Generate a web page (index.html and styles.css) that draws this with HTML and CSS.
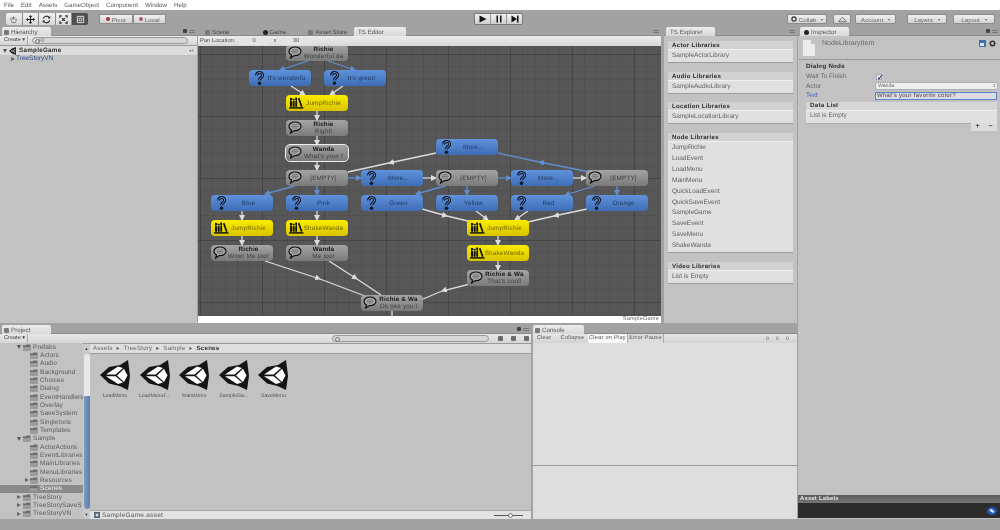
FILE: index.html
```html
<!DOCTYPE html>
<html lang="en">
<head>
<meta charset="utf-8">
<title>TreeStory - Unity</title>
<link rel="stylesheet" href="styles.css">
</head>
<body>
<svg class="defs" aria-hidden="true">
  <defs>
    <symbol id="i-q" viewBox="0 0 9 14">
      <path d="M1.6 4.6C1.6 .6 7.6 .6 7.6 4.2C7.6 6.6 4.5 6.4 4.5 9.2" fill="none" stroke="#0c1420" stroke-width="3"/>
      <path d="M1.6 4.6C1.6 .6 7.6 .6 7.6 4.2C7.6 6.6 4.5 6.4 4.5 9.2" fill="none" stroke="#6a9ae0" stroke-width="1"/>
      <circle cx="4.5" cy="12.2" r="1.7" fill="#0c1420"/>
    </symbol>
    <symbol id="i-bub" viewBox="0 0 14 13">
      <path d="M7 1C3.4 1 1 2.9 1 5.3C1 7 2 8.3 3.6 9L2.6 12L6.4 9.6C10.4 9.8 13 7.9 13 5.3C13 2.9 10.6 1 7 1Z" fill="#a8a8a8" stroke="#0b0b0b" stroke-width="1.1"/>
      <path d="M4 3.8H10M3.4 5.4H10.6M4 7H9.6" stroke="#6c6c6c" stroke-width=".8"/>
    </symbol>
    <symbol id="i-book" viewBox="0 0 16 13">
      <path d="M1 1H3.2V10.5H1ZM3.9 2H6V10.5H3.9ZM6.7 .5H8.6V10.5H6.7Z" fill="#111"/>
      <path d="M9.5 1.5L11.2 .8L14.5 10.2L12.8 10.8Z" fill="#111"/>
      <path d="M0 11H15.5V12.6H0Z" fill="#111"/>
      <path d="M1.6 4H7.8" stroke="#e8d800" stroke-width=".8"/>
    </symbol>
    <symbol id="i-unity" viewBox="0 0 30 30">
      <path d="M0 15L9 7L20 5L28 0L30 16L28 30L19.5 26L9 23.5Z" fill="#141414"/>
      <path d="M6 14.5L18 6.5L23 8L15.6 14.5ZM6 16.2H15.6L23 22.6L18 24ZM17 15.4L24 8.8L27.5 15.6L24 22Z" fill="#fff"/>
    </symbol>
    <symbol id="i-folder" viewBox="0 0 9 7">
      <path d="M0 1H3.4L4.2 0H8.4V7H0Z" fill="#6e6e6e"/>
      <path d="M0 3H8.4V7H0Z" fill="#9c9c9c"/>
    </symbol>
    <marker id="a-w" viewBox="0 0 6 6" refX="5" refY="3" markerWidth="6" markerHeight="6" orient="auto" markerUnits="userSpaceOnUse">
      <path d="M0 0L6 3L0 6Z" fill="#dcdcdc"/>
    </marker>
    <marker id="a-b" viewBox="0 0 6 6" refX="5" refY="3" markerWidth="6" markerHeight="6" orient="auto" markerUnits="userSpaceOnUse">
      <path d="M0 0L6 3L0 6Z" fill="#5f8ed2"/>
    </marker>
  </defs>
</svg>

<div class="app">
  <nav class="menubar">
    <span>File</span><span>Edit</span><span>Assets</span><span>GameObject</span><span>Component</span><span>Window</span><span>Help</span>
  </nav>

  <header class="toolbar">
    <div class="btn-group tools">
      <button class="tool"><svg viewBox="0 0 10 10"><path d="M2 5V3.5M3.5 5V2M5 5V1.5M6.5 5V2.5M8 6V4M2 5L3.5 8.5H7L8 6" fill="none" stroke="#777" stroke-width="1"/></svg></button>
      <button class="tool"><svg viewBox="0 0 10 10"><path d="M5 0L7 2.2H5.6V4.4H7.8V3L10 5L7.8 7V5.6H5.6V7.8H7L5 10L3 7.8H4.4V5.6H2.2V7L0 5L2.2 3V4.4H4.4V2.2H3Z" fill="#222"/></svg></button>
      <button class="tool"><svg viewBox="0 0 10 10"><path d="M1.5 4A3.6 3.6 0 0 1 8 3M8.5 6A3.6 3.6 0 0 1 2 7" fill="none" stroke="#222" stroke-width="1.3"/><path d="M6.6 3.8L9.4 3.8L9 1ZM3.4 6.2L.6 6.2L1 9Z" fill="#222"/></svg></button>
      <button class="tool"><svg viewBox="0 0 10 10"><path d="M1 3V1H3M7 1H9V3M9 7V9H7M3 9H1V7" fill="none" stroke="#222" stroke-width="1.2"/><path d="M3.5 3.5L6.5 6.5M6.5 3.5L3.5 6.5" stroke="#222" stroke-width="1.2"/></svg></button>
      <button class="tool tool-on"><svg viewBox="0 0 10 10"><path d="M1.5 1.5H8.5V8.5H1.5Z" fill="none" stroke="#eee" stroke-width="1"/><path d="M3.5 3.5H6.5V6.5H3.5Z" fill="none" stroke="#ddd" stroke-width="1"/></svg></button>
    </div>
    <div class="btn-group pivot">
      <button class="tbtn pivot-btn"><i class="dot dot-red"></i>Pivot</button>
      <button class="tbtn pivot-btn"><i class="dot dot-grey"></i>Local</button>
    </div>
    <div class="btn-group play">
      <button class="play-btn"><svg viewBox="0 0 8 8"><path d="M.5 .5L7.5 4L.5 7.5Z" fill="#111"/></svg></button>
      <button class="play-btn"><svg viewBox="0 0 8 8"><path d="M1.5 .5H3V7.5H1.5ZM5 .5H6.5V7.5H5Z" fill="#111"/></svg></button>
      <button class="play-btn"><svg viewBox="0 0 8 8"><path d="M.5 .5L6 4L.5 7.5ZM6 .5H7.5V7.5H6Z" fill="#111"/></svg></button>
    </div>
    <div class="right-tools">
      <button class="tbtn collab"><svg class="tbtn-ic" viewBox="0 0 8 8"><circle cx="4" cy="4" r="2.8" fill="none" stroke="#333" stroke-width="1.6"/></svg>Collab<b>▾</b></button>
      <button class="tbtn cloud"><svg class="cloud-ic" viewBox="0 0 12 8"><path d="M1 7H11L8.5 3.5L6 1L3.5 3.5Z" fill="none" stroke="#444" stroke-width=".9"/></svg></button>
      <button class="tbtn account">Account<b>▾</b></button>
      <button class="tbtn layers">Layers<b>▾</b></button>
      <button class="tbtn layout">Layout<b>▾</b></button>
    </div>
  </header>

  <div class="main">
    <div class="workspace">
      <div class="top-row">

        <section class="panel hierarchy">
          <div class="tabs">
            <span class="tab"><i class="tab-ic"></i>Hierarchy</span>
            <span class="tab-menu"><i class="lock"></i><i class="burger"></i></span>
          </div>
          <div class="panel-bar">
            <span class="mini-btn">Create ▾</span>
            <span class="search search-h">All</span>
          </div>
          <div class="scene-row">
            <span class="tri tri-down"></span>
            <svg class="scene-ic" viewBox="0 0 8 8"><path d="M0 4L3 1.5L7 0V8L3 6.5Z" fill="#222"/><path d="M2 4H4.5L6 2M4.5 4L6 6" stroke="#ddd" stroke-width=".8" fill="none"/></svg>
            <b>SampleGame</b>
            <span class="row-menu">▾≡</span>
          </div>
          <div class="go-row"><span class="tri tri-right"></span>TreeStoryVN</div>
        </section>

        <section class="panel editor">
          <div class="tabs editor-tabs">
            <span class="tab-off"><i class="tab-ic"></i>Scene</span>
            <span class="tab-off tab-game"><i class="tab-ic tab-ic-dark"></i>Game</span>
            <span class="tab-off tab-store"><i class="tab-ic"></i>Asset Store</span>
            <span class="tab tab-editor">TS Editor</span>
            <span class="tab-menu"><i class="burger"></i></span>
          </div>
          <div class="editor-bar">
            <span class="field-label">Pan Location:</span>
            <span class="num-field">0</span>
            <span class="x-label">x</span>
            <span class="num-field num-wide">30</span>
          </div>
          <div class="canvas">
            <svg class="edges" viewBox="198 46 463 270" aria-hidden="true">
              <g class="edge-blue">
                <path d="M308 61L280 70" marker-end="url(#a-b)"/>
                <path d="M328 61L355 70" marker-end="url(#a-b)"/>
                <path d="M348 178H361" marker-end="url(#a-b)"/>
                <path d="M295 186L265 194" marker-end="url(#a-b)"/>
                <path d="M317 186V195" marker-end="url(#a-b)"/>
                <path d="M498 178H511" marker-end="url(#a-b)"/>
                <path d="M445 186L416 194" marker-end="url(#a-b)"/>
                <path d="M467 186V195" marker-end="url(#a-b)"/>
                <path d="M595 186L565 195" marker-end="url(#a-b)"/>
                <path d="M617 186V195" marker-end="url(#a-b)"/>
                <path d="M590 172L539 162L498 153" marker-mid="url(#a-b)"/>
              </g>
              <g class="edge-white">
                <path d="M291 86L305 95" marker-end="url(#a-w)"/>
                <path d="M343 86L330 95" marker-end="url(#a-w)"/>
                <path d="M317 111V120" marker-end="url(#a-w)"/>
                <path d="M317 136V145" marker-end="url(#a-w)"/>
                <path d="M317 162V170" marker-end="url(#a-w)"/>
                <path d="M423 178H436" marker-end="url(#a-w)"/>
                <path d="M573 178H586" marker-end="url(#a-w)"/>
                <path d="M242 211V220" marker-end="url(#a-w)"/>
                <path d="M242 236V245" marker-end="url(#a-w)"/>
                <path d="M317 211V220" marker-end="url(#a-w)"/>
                <path d="M317 236V245" marker-end="url(#a-w)"/>
                <path d="M436 153L389 163L348 172" marker-mid="url(#a-w)"/>
                <path d="M265 261L320 279L365 296" marker-mid="url(#a-w)"/>
                <path d="M329 261L357 279L381 295" marker-mid="url(#a-w)"/>
                <path d="M422 209L447 216L472 222" marker-mid="url(#a-w)"/>
                <path d="M476 211L488 220" marker-end="url(#a-w)"/>
                <path d="M528 211L515 220" marker-end="url(#a-w)"/>
                <path d="M587 209L554 216L528 222" marker-mid="url(#a-w)"/>
                <path d="M498 236V245" marker-end="url(#a-w)"/>
                <path d="M498 261V270" marker-end="url(#a-w)"/>
                <path d="M470 284L442 291L423 299" marker-mid="url(#a-w)"/>
                <path d="M392 311V316"/>
              </g>
            </svg>

            <div class="node gray col-b row-45"><svg class="ic-bub"><use href="#i-bub"/></svg><p class="txt"><b>Richie</b><span>Wonderful da</span></p></div>
            <div class="node blue col-a row-70"><svg class="ic-q"><use href="#i-q"/></svg><p class="txt">It's wonderfu</p></div>
            <div class="node blue col-c row-70"><svg class="ic-q"><use href="#i-q"/></svg><p class="txt">It's great!</p></div>
            <div class="node yellow col-b row-95"><svg class="ic-book"><use href="#i-book"/></svg><p class="txt">JumpRichie</p></div>
            <div class="node gray col-b row-120"><svg class="ic-bub"><use href="#i-bub"/></svg><p class="txt"><b>Richie</b><span>Right!</span></p></div>
            <div class="node gray selected col-b row-145"><svg class="ic-bub"><use href="#i-bub"/></svg><p class="txt"><b>Wanda</b><span>What's your f</span></p></div>
            <div class="node blue col-e row-139"><svg class="ic-q"><use href="#i-q"/></svg><p class="txt">More...</p></div>

            <div class="node gray col-b row-170"><svg class="ic-bub"><use href="#i-bub"/></svg><p class="txt"><span>[EMPTY]</span></p></div>
            <div class="node blue col-d row-170"><svg class="ic-q"><use href="#i-q"/></svg><p class="txt">More...</p></div>
            <div class="node gray col-e row-170"><svg class="ic-bub"><use href="#i-bub"/></svg><p class="txt"><span>[EMPTY]</span></p></div>
            <div class="node blue col-f row-170"><svg class="ic-q"><use href="#i-q"/></svg><p class="txt">More...</p></div>
            <div class="node gray col-g row-170"><svg class="ic-bub"><use href="#i-bub"/></svg><p class="txt"><span>[EMPTY]</span></p></div>

            <div class="node blue col-h row-195"><svg class="ic-q"><use href="#i-q"/></svg><p class="txt">Blue</p></div>
            <div class="node blue col-b row-195"><svg class="ic-q"><use href="#i-q"/></svg><p class="txt">Pink</p></div>
            <div class="node blue col-d row-195"><svg class="ic-q"><use href="#i-q"/></svg><p class="txt">Green</p></div>
            <div class="node blue col-e row-195"><svg class="ic-q"><use href="#i-q"/></svg><p class="txt">Yellow</p></div>
            <div class="node blue col-f row-195"><svg class="ic-q"><use href="#i-q"/></svg><p class="txt">Red</p></div>
            <div class="node blue col-g row-195"><svg class="ic-q"><use href="#i-q"/></svg><p class="txt">Orange</p></div>

            <div class="node yellow col-h row-220"><svg class="ic-book"><use href="#i-book"/></svg><p class="txt">JumpRichie</p></div>
            <div class="node yellow col-b row-220"><svg class="ic-book"><use href="#i-book"/></svg><p class="txt">ShakeWanda</p></div>
            <div class="node yellow col-j row-220"><svg class="ic-book"><use href="#i-book"/></svg><p class="txt">JumpRichie</p></div>
            <div class="node yellow col-j row-245"><svg class="ic-book"><use href="#i-book"/></svg><p class="txt">ShakeWanda</p></div>

            <div class="node gray col-h row-245"><svg class="ic-bub"><use href="#i-bub"/></svg><p class="txt"><b>Richie</b><span>Wow! Me too!</span></p></div>
            <div class="node gray col-b row-245"><svg class="ic-bub"><use href="#i-bub"/></svg><p class="txt"><b>Wanda</b><span>Me too!</span></p></div>
            <div class="node gray col-j row-270"><svg class="ic-bub"><use href="#i-bub"/></svg><p class="txt"><b>Richie &amp; Wa</b><span>That's cool!</span></p></div>
            <div class="node gray col-d row-295"><svg class="ic-bub"><use href="#i-bub"/></svg><p class="txt"><b>Richie &amp; Wa</b><span>Ok see you l</span></p></div>
          </div>
          <div class="canvas-foot">SampleGame</div>
        </section>

        <section class="panel explorer">
          <div class="tabs">
            <span class="tab tab-explorer">TS Explorer</span>
            <span class="tab-menu"><i class="burger"></i></span>
          </div>
          <div class="explorer-body">
            <div class="lib"><h3>Actor Libraries</h3><ul><li>SampleActorLibrary</li></ul></div>
            <div class="lib"><h3>Audio Libraries</h3><ul><li>SampleAudioLibrary</li></ul></div>
            <div class="lib"><h3>Location Libraries</h3><ul><li>SampleLocationLibrary</li></ul></div>
            <div class="lib"><h3>Node Libraries</h3><ul>
              <li>JumpRichie</li><li>LoadEvent</li><li>LoadMenu</li><li>MainMenu</li><li>QuickLoadEvent</li><li>QuickSaveEvent</li><li>SampleGame</li><li>SaveEvent</li><li>SaveMenu</li><li>ShakeWanda</li>
            </ul></div>
            <div class="lib"><h3>Video Libraries</h3><ul><li>List is Empty</li></ul></div>
          </div>
        </section>
      </div>

      <div class="bottom-row">
        <section class="panel project">
          <div class="tabs tabs-tall">
            <span class="tab"><i class="tab-ic"></i>Project</span>
            <span class="tab-menu"><i class="lock"></i><i class="burger"></i></span>
          </div>
          <div class="panel-bar project-bar">
            <span class="mini-btn">Create ▾</span>
            <span class="search search-p"></span>
            <span class="bar-icons"><i></i><i></i><i></i></span>
          </div>
          <div class="project-body">
            <div class="tree">
              <div class="row lvl1"><span class="tri tri-down"></span><svg class="folder"><use href="#i-folder"/></svg>Prefabs</div>
              <div class="row lvl2"><svg class="folder"><use href="#i-folder"/></svg>Actors</div>
              <div class="row lvl2"><svg class="folder"><use href="#i-folder"/></svg>Audio</div>
              <div class="row lvl2"><svg class="folder"><use href="#i-folder"/></svg>Background</div>
              <div class="row lvl2"><svg class="folder"><use href="#i-folder"/></svg>Choices</div>
              <div class="row lvl2"><svg class="folder"><use href="#i-folder"/></svg>Dialog</div>
              <div class="row lvl2"><svg class="folder"><use href="#i-folder"/></svg>EventHandlers</div>
              <div class="row lvl2"><svg class="folder"><use href="#i-folder"/></svg>Overlay</div>
              <div class="row lvl2"><svg class="folder"><use href="#i-folder"/></svg>SaveSystem</div>
              <div class="row lvl2"><svg class="folder"><use href="#i-folder"/></svg>Singletons</div>
              <div class="row lvl2"><svg class="folder"><use href="#i-folder"/></svg>Templates</div>
              <div class="row lvl1"><span class="tri tri-down"></span><svg class="folder"><use href="#i-folder"/></svg>Sample</div>
              <div class="row lvl2"><svg class="folder"><use href="#i-folder"/></svg>ActorActions</div>
              <div class="row lvl2"><svg class="folder"><use href="#i-folder"/></svg>EventLibraries</div>
              <div class="row lvl2"><svg class="folder"><use href="#i-folder"/></svg>MainLibraries</div>
              <div class="row lvl2"><svg class="folder"><use href="#i-folder"/></svg>MenuLibraries</div>
              <div class="row lvl2"><span class="tri tri-right"></span><svg class="folder"><use href="#i-folder"/></svg>Resources</div>
              <div class="row lvl2 row-sel"><svg class="folder"><use href="#i-folder"/></svg>Scenes</div>
              <div class="row lvl1"><span class="tri tri-right"></span><svg class="folder"><use href="#i-folder"/></svg>TreeStory</div>
              <div class="row lvl1"><span class="tri tri-right"></span><svg class="folder"><use href="#i-folder"/></svg>TreeStorySaveS</div>
              <div class="row lvl1"><span class="tri tri-right"></span><svg class="folder"><use href="#i-folder"/></svg>TreeStoryVN</div>
            </div>
            <div class="scrollbar">
              <span class="sb-arrow">▲</span>
              <span class="sb-track"></span>
              <span class="sb-thumb"></span>
              <span class="sb-arrow">▼</span>
            </div>
            <div class="assets">
              <div class="crumbs">Assets &nbsp;▸&nbsp; TreeStory &nbsp;▸&nbsp; Sample &nbsp;▸&nbsp; <b>Scenes</b></div>
              <div class="asset-grid">
                <figure class="asset"><svg class="unity"><use href="#i-unity"/></svg><figcaption>LoadMenu</figcaption></figure>
                <figure class="asset"><svg class="unity"><use href="#i-unity"/></svg><figcaption>LoadMenuF...</figcaption></figure>
                <figure class="asset"><svg class="unity"><use href="#i-unity"/></svg><figcaption>MainMenu</figcaption></figure>
                <figure class="asset"><svg class="unity"><use href="#i-unity"/></svg><figcaption>SampleGa...</figcaption></figure>
                <figure class="asset"><svg class="unity"><use href="#i-unity"/></svg><figcaption>SaveMenu</figcaption></figure>
              </div>
              <div class="asset-foot">
                <svg class="asset-ic" viewBox="0 0 7 7"><path d="M0 0H7V7H0Z" fill="#567"/><path d="M2 2H5V5H2Z" fill="#cde"/></svg>
                <span>SampleGame.asset</span>
                <span class="slider"><i></i></span>
              </div>
            </div>
          </div>
        </section>

        <section class="panel console">
          <div class="tabs tabs-tall">
            <span class="tab tab-console"><i class="tab-ic"></i>Console</span>
          </div>
          <div class="console-bar">
            <span class="cbtn cbtn-clear">Clear</span>
            <span class="cbtn cbtn-collapse">Collapse</span>
            <span class="cbtn cbtn-on">Clear on Play</span>
            <span class="cbtn cbtn-err">Error Pause</span>
            <span class="counts"><i>0</i><i>0</i><i>0</i></span>
          </div>
          <div class="console-log"></div>
          <div class="console-detail"></div>
        </section>
      </div>
    </div>

    <aside class="panel inspector">
      <div class="tabs">
        <span class="tab tab-inspector"><i class="tab-ic tab-ic-dark"></i>Inspector</span>
        <span class="tab-menu"><i class="lock"></i><i class="burger"></i></span>
      </div>
      <div class="insp-head">
        <svg class="doc" viewBox="0 0 12 16"><path d="M0 0H8L12 4V16H0Z" fill="#ececec"/><path d="M8 0V4H12Z" fill="#bbb"/></svg>
        <span class="insp-title">NodeLibraryItem</span>
        <span class="insp-actions">
          <svg viewBox="0 0 7 7"><path d="M0 0H7V7H0Z" fill="#3f6ea8"/><path d="M1 3H5V6H1Z" fill="#dbe6f2"/></svg>
          <svg viewBox="0 0 7 7"><circle cx="3.5" cy="3.5" r="2.2" fill="none" stroke="#333" stroke-width="1.6"/></svg>
        </span>
      </div>
      <div class="insp-body">
        <h4>Dialog Node</h4>
        <div class="prop"><label>Wait To Finish</label><span class="check">✓</span></div>
        <div class="prop"><label>Actor</label><span class="dropdown">Wanda<b>⇕</b></span></div>
        <div class="prop prop-focus"><label>Text</label><span class="text-input">What's your favorite color?</span></div>
        <div class="data-list">
          <h5>Data List</h5>
          <p>List is Empty</p>
        </div>
        <div class="list-foot"><span>+</span><span>−</span></div>
      </div>
      <div class="labels-head">Asset Labels</div>
      <div class="labels-body"><svg class="tag" viewBox="0 0 10 8"><ellipse cx="5" cy="4" rx="5" ry="4" fill="#2458b8"/><path d="M2.5 2.5L4.5 2L7.5 4.5L6 6L3 4Z" fill="#eef"/></svg></div>
    </aside>
  </div>

  <footer class="status"></footer>
</div>
</body>
</html>
```

FILE: styles.css
```css
* { box-sizing: border-box; }

html, body {
  margin: 0;
  padding: 0;
  background: #a2a2a2;
}

body {
  font-family: "Liberation Sans", Arial, sans-serif;
  font-size: 6.5px;
  color: #4c4c4c;
  text-rendering: geometricPrecision;
}

.defs { position: absolute; width: 0; height: 0; }

button { font: inherit; color: inherit; padding: 0; margin: 0; border: 0; }
h3, h4, h5, p, ul, figure { margin: 0; padding: 0; }
ul { list-style: none; }
i { font-style: normal; }

.app {
  width: 1000px;
  height: 530px;
  display: flex;
  flex-direction: column;
  overflow: hidden;
  background: #a2a2a2;
  filter: blur(.35px);
}

/* menu */
.menubar {
  flex: 0 0 10px;
  display: flex;
  align-items: center;
  gap: 7px;
  padding-left: 4px;
  background: #fff;
  font-size: 6.2px;
  color: #555;
}

/* toolbar */
.toolbar {
  flex: 0 0 17px;
  display: flex;
  align-items: center;
  padding: 1px 5px 0 6px;
  background: #a2a2a2;
}

.btn-group { display: flex; height: 12px; }

.tools { width: 82px; border-radius: 2px; overflow: hidden; }

.tool {
  flex: 1;
  display: flex;
  align-items: center;
  justify-content: center;
  background: linear-gradient(#f2f2f2, #d6d6d6);
  border-right: 1px solid #8a8a8a;
}
.tool svg { width: 9px; height: 9px; }
.tool-on { background: #4f4f4f; border-right: 0; }

.pivot { margin-left: 11px; width: 67px; height: 10px; }

.tbtn {
  display: flex;
  align-items: center;
  justify-content: center;
  gap: 2px;
  height: 10px;
  font-size: 6.2px;
  color: #666;
  background: linear-gradient(#efefef, #d2d2d2);
  border: 1px solid #8c8c8c;
  border-radius: 2px;
}
.pivot-btn { flex: 1; border-radius: 0; }
.dot { width: 4px; height: 4px; border-radius: 50%; }
.dot-red { background: #a03040; }
.dot-grey { background: #a06068; }

.play { margin-left: 308px; width: 49px; border: 1px solid #777; border-radius: 2px; overflow: hidden; }
.play-btn {
  flex: 1;
  display: flex;
  align-items: center;
  justify-content: center;
  background: linear-gradient(#f0f0f0, #d0d0d0);
  border-right: 1px solid #999;
}
.play-btn:last-child { border-right: 0; }
.play-btn svg { width: 8px; height: 8px; }

.right-tools { margin-left: auto; display: flex; }
.tbtn b { font-weight: 400; font-size: 4px; margin-left: 3px; }
.tbtn-ic { width: 6px; height: 6px; }
.cloud-ic { width: 9px; height: 7px; }
.collab { width: 40px; }
.cloud { width: 18px; margin-left: 6px; }
.account { width: 41px; margin-left: 4px; }
.layers { width: 40px; margin-left: 11px; }
.layout { width: 42px; margin-left: 6px; }

/* layout */
.main { flex: 0 0 492px; display: flex; }
.workspace { flex: 0 0 797px; display: flex; flex-direction: column; }
.top-row { flex: 0 0 296px; display: flex; }
.bottom-row { flex: 0 0 196px; display: flex; }

.panel { display: flex; flex-direction: column; min-width: 0; }
.hierarchy { width: 197px; background: #c2c2c2; }
.editor { width: 463px; margin-left: 1px; background: #c2c2c2; }
.explorer { width: 133px; margin-left: 3px; background: #c2c2c2; }
.project { width: 531px; background: #c2c2c2; }
.console { width: 264px; margin-left: 2px; background: #dedede; }
.inspector { flex: 0 0 202px; margin-left: 1px; background: #c2c2c2; }

/* tabs */
.tabs {
  flex: 0 0 9px;
  display: flex;
  align-items: flex-end;
  background: #a2a2a2;
  border-bottom: 1px solid #8a8a8a;
  padding-left: 2px;
  position: relative;
}
.tabs-tall { flex-basis: 11px; }

.tab, .tab-off {
  display: flex;
  align-items: center;
  gap: 2px;
  height: 9px;
  font-size: 6.2px;
  padding: 2px 0 0 2px;
  margin-bottom: -1px;
  color: #555;
}
.tab {
  width: 49px;
  background: linear-gradient(#ececec, #d8d8d8);
  border-radius: 2px 2px 0 0;
}
.tab-off { color: #444; }
.tab-game { margin-left: 31px; }
.tab-store { margin-left: 20px; }
.editor-tabs { padding-left: 5px; }
.tab-editor { position: absolute; left: 156px; width: 52px; padding-left: 4px; }
.tab-explorer { padding-left: 4px; }
.tab-console { width: 51px; margin-left: -2px; }
.tab-inspector { padding-left: 4px; margin-left: 0; }

.tab-ic { width: 5px; height: 5px; background: #7a7a7a; border-radius: 1px; }
.tab-ic-dark { background: #222; border-radius: 50%; }

.tab-menu {
  margin-left: auto;
  margin-right: 2px;
  margin-bottom: 1px;
  display: flex;
  align-items: center;
  gap: 2px;
  height: 6px;
}
.lock { width: 4px; height: 4px; background: #444; border-radius: 1px; }
.burger { width: 6px; height: 3px; border-top: 1px solid #777; border-bottom: 1px solid #777; }

/* panel bars */
.panel-bar {
  flex: 0 0 10px;
  display: flex;
  align-items: center;
  background: linear-gradient(#ececec, #d4d4d4);
  border-bottom: 1px solid #9a9a9a;
  padding-left: 2px;
}
.mini-btn {
  font-size: 5.6px;
  padding: 0 2px;
  height: 9px;
  line-height: 9px;
  border-right: 1px solid #aaa;
  color: #444;
}
.search {
  position: relative;
  height: 7px;
  line-height: 6px;
  border: 1px solid #999;
  border-radius: 4px;
  background: #d6d6d6;
  font-size: 5.6px;
  color: #888;
  padding-left: 5px;
}
.search::before {
  content: "";
  position: absolute;
  left: 1.5px;
  top: 1px;
  width: 3px;
  height: 3px;
  border: .7px solid #777;
  border-radius: 50%;
}
.search-h { width: 156px; margin-left: 4px; }
.search-p { width: 157px; margin-left: 304px; }

.scene-row {
  flex: 0 0 9px;
  display: flex;
  align-items: center;
  gap: 2px;
  padding-left: 3px;
  background: #dcdcdc;
  font-size: 6.3px;
  letter-spacing: .25px;
  color: #2c2c2c;
}
.scene-ic { width: 8px; height: 8px; }
.row-menu { margin-left: auto; margin-right: 3px; font-size: 4px; color: #666; }
.go-row {
  display: flex;
  align-items: center;
  gap: 1px;
  height: 9px;
  padding-left: 11px;
  margin-top: -1px;
  color: #2d4b8a;
}

.tri { width: 0; height: 0; flex: none; }
.tri-down { border-left: 2.5px solid transparent; border-right: 2.5px solid transparent; border-top: 4px solid #555; }
.tri-right { border-top: 2.5px solid transparent; border-bottom: 2.5px solid transparent; border-left: 4px solid #666; }

/* editor */
.editor-bar {
  flex: 0 0 10px;
  display: flex;
  align-items: center;
  padding-left: 2px;
  background: linear-gradient(#ececec, #d8d8d8);
  font-size: 5.8px;
}
.field-label { width: 39px; }
.num-field {
  width: 30px;
  height: 7px;
  line-height: 7px;
  text-align: center;
  background: #e4e4e4;
}
.x-label { width: 12px; text-align: center; }
.canvas {
  flex: 0 0 270px;
  position: relative;
  overflow: hidden;
  background-color: #575757;
  background-image:
    linear-gradient(90deg, rgba(0, 0, 0, .15) 1px, transparent 1px),
    linear-gradient(rgba(0, 0, 0, .15) 1px, transparent 1px),
    linear-gradient(90deg, rgba(0, 0, 0, .07) 1px, transparent 1px),
    linear-gradient(rgba(0, 0, 0, .07) 1px, transparent 1px);
  background-size: 62px 62px, 62px 62px, 12.4px 12.4px, 12.4px 12.4px;
  background-position: 2px 8px, 2px 8px, 2px 8px, 2px 8px;
}
.canvas-foot {
  flex: 0 0 7px;
  background: #fff;
  font-size: 5.6px;
  line-height: 7px;
  text-align: right;
  padding-right: 2px;
  color: #666;
  letter-spacing: .2px;
}
.edges { position: absolute; left: 0; top: 0; width: 463px; height: 270px; }
.edge-blue path { fill: none; stroke: #5f8ed2; stroke-width: 1.3; }
.edge-white path { fill: none; stroke: #dcdcdc; stroke-width: 1.3; }

/* nodes */
.node {
  position: absolute;
  width: 62px;
  height: 16px;
  border-radius: 4px;
}
.gray { background: linear-gradient(#a4a4a4, #7a7a7a); color: #3e3e3e; }
.blue { background: linear-gradient(#5f92dc, #3e6db4); color: #203c66; }
.yellow { background: linear-gradient(#fbec00, #d8c400); color: #6f6500; }
.selected { outline: 1.5px solid #eee; outline-offset: 0; border-radius: 4px; }

.txt {
  position: absolute;
  left: 14px;
  right: 1px;
  top: 0;
  height: 16px;
  overflow: hidden;
  display: flex;
  flex-direction: column;
  align-items: center;
  justify-content: center;
  white-space: nowrap;
  font-size: 6.3px;
  line-height: 7px;
  letter-spacing: .2px;
}
.txt b { color: #151515; }

.ic-bub, .ic-q, .ic-book { position: absolute; }
.ic-bub { left: 2px; top: 1px; width: 14px; height: 13px; }
.ic-q { left: 6px; top: 1px; width: 9px; height: 14px; }
.ic-book { left: 3px; top: 2px; width: 15px; height: 12px; }

.col-h { left: 13px; }
.col-a { left: 51px; }
.col-b { left: 88px; }
.col-c { left: 126px; }
.col-d { left: 163px; }
.col-e { left: 238px; }
.col-j { left: 269px; }
.col-f { left: 313px; }
.col-g { left: 388px; }
.row-45 { top: -1px; }
.row-70 { top: 24px; }
.row-95 { top: 49px; }
.row-120 { top: 74px; }
.row-139 { top: 93px; }
.row-145 { top: 99px; }
.row-170 { top: 124px; }
.row-195 { top: 149px; }
.row-220 { top: 174px; }
.row-245 { top: 199px; }
.row-270 { top: 224px; }
.row-295 { top: 249px; }

/* explorer */
.explorer-body {
  flex: 1;
  display: flex;
  flex-direction: column;
  gap: 9.8px;
  padding: 5px 4px 0;
}
.lib {
  background: #e0e0e0;
  box-shadow: 0 1px 0 #9c9c9c;
}
.lib h3 {
  height: 9px;
  line-height: 9px;
  padding-left: 4px;
  font-size: 6.1px;
  letter-spacing: .3px;
  color: #2c2c2c;
  background: #d2d2d2;
  border-bottom: 1px solid #f0f0f0;
}
.lib ul { padding-bottom: 1px; }
.lib li { height: 10.9px; line-height: 11px; padding-left: 4px; color: #5e5e5e; }

/* project */
.project-bar { flex-basis: 9px; background: linear-gradient(#e8e8e8, #d6d6d6); }
.bar-icons { margin-left: 9px; display: flex; gap: 8px; }
.bar-icons i { width: 5px; height: 5px; background: #6a6a6a; border-radius: 1px; }
.project-body { flex: 1; display: flex; min-height: 0; }

.tree { flex: 0 0 83px; overflow: hidden; background: #c2c2c2; margin-top: -1px; }
.row {
  display: flex;
  align-items: center;
  height: 8.33px;
  color: #5a5a5a;
  white-space: nowrap;
  letter-spacing: .08px;
  position: relative;
}
.lvl1 { padding-left: 23px; }
.lvl2 { padding-left: 30px; }
.row .tri { position: absolute; }
.lvl1 .tri { left: 17px; }
.lvl2 .tri { left: 25px; }
.folder { width: 8px; height: 7px; margin-right: 2px; flex: none; }
.row-sel { background: #8a8a8a; color: #f0f0f0; }

.scrollbar {
  flex: 0 0 7px;
  display: flex;
  flex-direction: column;
  background: #c9c9c9;
  align-items: center;
}
.sb-arrow { height: 9px; line-height: 9px; font-size: 4px; color: #333; }
.sb-track { flex: 0 0 42px; width: 6px; background: #e8e8e8; border-radius: 3px 3px 0 0; margin-top: 1px; }
.sb-thumb { flex: 1; width: 6px; background: linear-gradient(90deg, #7f9bc2, #5e7cab); border-radius: 0 0 3px 3px; margin-bottom: 1px; }

.assets { flex: 1; display: flex; flex-direction: column; min-width: 0; }
.crumbs {
  flex: 0 0 10px;
  line-height: 9px;
  padding-left: 3px;
  background: #dedede;
  border-bottom: 1px solid #9c9c9c;
  font-size: 6.2px;
  letter-spacing: .2px;
  color: #666;
}
.crumbs b { color: #333; }
.asset-grid {
  flex: 1;
  display: flex;
  padding: 6px 0 0 10px;
  background: #c2c2c2;
}
.asset {
  width: 39.6px;
  display: flex;
  flex-direction: column;
  align-items: flex-start;
}
.unity { width: 30px; height: 30px; display: block; }
.asset figcaption {
  width: 30px;
  margin-top: 2px;
  text-align: center;
  font-size: 5.2px;
  line-height: 8px;
  white-space: nowrap;
  color: #555;
  display: flex;
  justify-content: center;
}
.asset-foot {
  flex: 0 0 9px;
  display: flex;
  align-items: center;
  gap: 2px;
  padding-left: 4px;
  background: #e2e2e2;
  border-top: 1px solid #a8a8a8;
  letter-spacing: .25px;
  color: #555;
}
.asset-ic { width: 6px; height: 6px; }
.slider {
  margin-left: auto;
  margin-right: 8px;
  width: 29px;
  height: 1px;
  background: #555;
  position: relative;
}
.slider i {
  position: absolute;
  left: 14px;
  top: -2px;
  width: 5px;
  height: 5px;
  border-radius: 50%;
  background: #eee;
  border: 1px solid #777;
}

/* console */
.console-bar {
  flex: 0 0 9px;
  display: flex;
  align-items: center;
  background: linear-gradient(#e6e6e6, #d2d2d2);
  font-size: 5.6px;
  letter-spacing: .25px;
}
.cbtn { height: 9px; line-height: 9px; text-align: center; color: #555; }
.cbtn-clear { width: 22px; }
.cbtn-collapse { width: 31px; margin-left: 2px; }
.cbtn-on { width: 39px; background: #f8f8f8; }
.cbtn-err { width: 37px; background: #dcdcdc; border-left: 1px solid #aaa; border-right: 1px solid #aaa; }
.counts { margin-left: auto; margin-right: 8px; display: flex; gap: 7px; }
.counts i { font-size: 5px; }
.console-log { flex: 0 0 123px; background: #dedede; border-bottom: 1px solid #9a9a9a; }
.console-detail { flex: 1; background: #dedede; }

/* inspector */
.insp-head {
  flex: 0 0 24px;
  display: flex;
  padding: 4px 4px 0 5px;
  border-bottom: 1px solid #9a9a9a;
}
.doc { width: 12px; height: 16px; flex: none; }
.insp-title { margin-left: 7px; line-height: 7px; font-size: 7.1px; color: #666; }
.insp-actions { margin-left: auto; display: flex; gap: 3px; }
.insp-actions svg { width: 7px; height: 7px; }

.insp-body { flex: 1; padding: 2px 3px 0 8px; position: relative; }
.insp-body h4 { font-size: 6.2px; line-height: 9px; letter-spacing: .25px; color: #2c2c2c; height: 10px; }
.prop { display: flex; align-items: center; height: 9.5px; color: #666; }
.prop label { width: 70px; flex: none; }
.prop-focus label { color: #3c5ec8; }
.check {
  width: 6px;
  height: 6px;
  background: #e8e8e8;
  border: 1px solid #aaa;
  color: #1b3a80;
  font-size: 8px;
  line-height: 5px;
  font-weight: 700;
}
.dropdown {
  flex: 1;
  height: 6px;
  line-height: 6px;
  font-size: 5.2px;
  padding-left: 2px;
  background: #eee;
  border-radius: 1px;
  box-shadow: 0 0 0 .5px #999;
  display: flex;
  justify-content: space-between;
}
.dropdown b { font-weight: 400; font-size: 4px; margin-right: 1px; }
.text-input {
  flex: 1;
  height: 8px;
  line-height: 6px;
  font-size: 6px;
  letter-spacing: .3px;
  padding-left: 1px;
  background: #dcdcdc;
  border: 1px solid #5a84c8;
  color: #444;
  margin-left: -1px;
}
.data-list { background: #e0e0e0; margin-top: 1px; box-shadow: 0 1px 0 #aaa; margin-left: 0; }
.data-list h5 {
  height: 9px;
  line-height: 8px;
  padding-left: 4px;
  font-size: 6.2px;
  letter-spacing: .25px;
  color: #2c2c2c;
  background: #d6d6d6;
  border-bottom: 1px solid #efefef;
}
.data-list p { height: 12px; line-height: 10px; padding-left: 4px; color: #666; }
.list-foot {
  margin-left: auto;
  width: 26px;
  height: 8px;
  display: flex;
  justify-content: space-around;
  align-items: center;
  background: #dcdcdc;
  font-size: 7px;
  font-weight: 700;
  color: #444;
}
.labels-head {
  flex: 0 0 8px;
  line-height: 8px;
  padding-left: 2px;
  background: linear-gradient(#5a5a5a, #757575);
  color: #e8e8e8;
  font-size: 5.8px;
  font-weight: 700;
  letter-spacing: .25px;
}
.labels-body {
  flex: 0 0 15px;
  display: flex;
  justify-content: flex-end;
  align-items: center;
  padding-right: 3px;
  background: #2c2c2c;
  margin-bottom: 1px;
}
.tag { width: 10px; height: 8px; }

.status { flex: 1; background: #a2a2a2; }
```
